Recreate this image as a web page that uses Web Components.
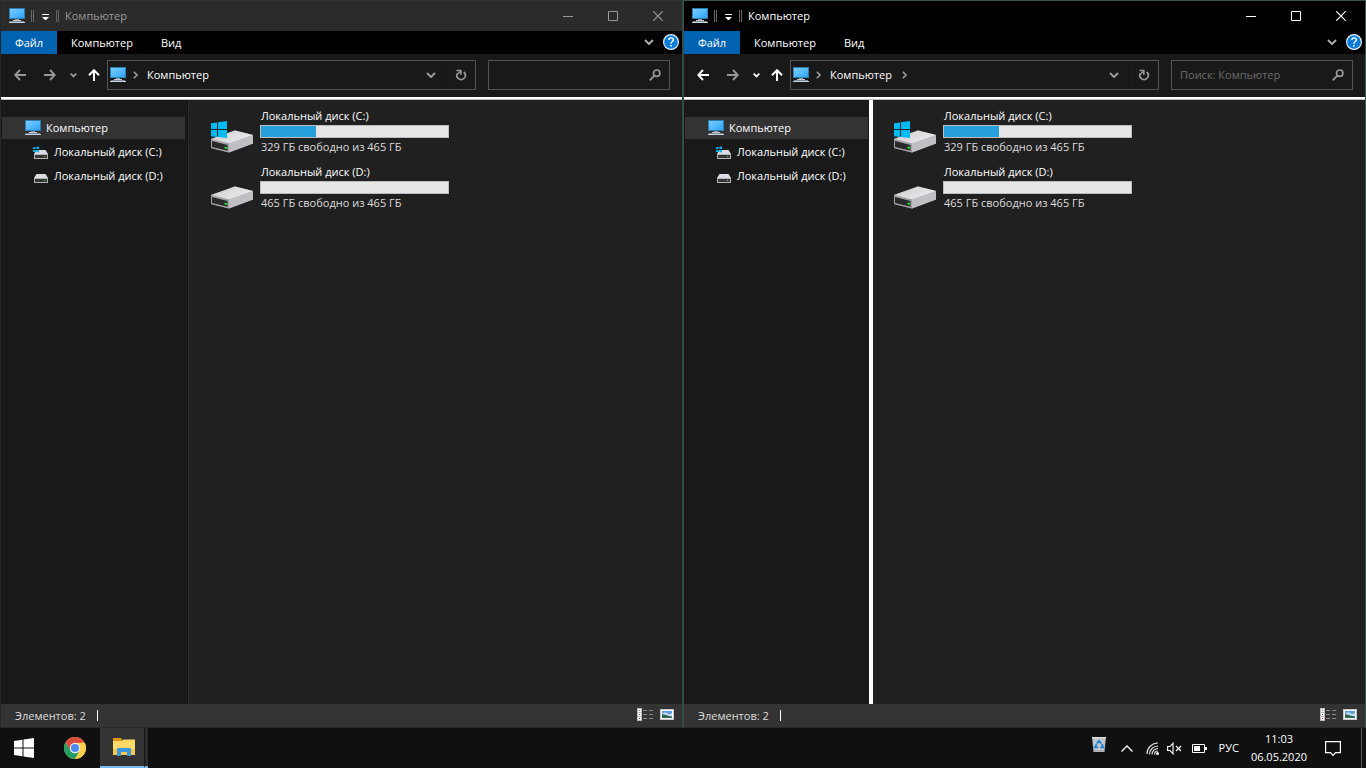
<!DOCTYPE html>
<html lang="ru">
<head>
<meta charset="utf-8">
<title>Компьютер</title>
<style>
html, body { height: 100%; margin: 0; }
body { background: #101010; color: #fff; font: 11px/16px "Open Sans", "Noto Sans", sans-serif; overflow: hidden; }
</style>
</head>
<body>
<desk-top>
  <explorer-window caption="Компьютер" inactive></explorer-window>
  <explorer-window caption="Компьютер" trail search="Поиск: Компьютер" splitter></explorer-window>
  <task-bar slot="bar"></task-bar>
</desk-top>
<script>
const DRIVE = `<defs><linearGradient id="g" x2="1" y2=".6"><stop stop-color="#c9c9cb"/><stop offset="1" stop-color="#ededf0"/></linearGradient></defs><path d="M0 18L24 9.500 42 14V22.500L18 31.500 0 27z" fill="#aaaaad"/><path d="M0 18L24 9.500 42 14l-24 8.500z" fill="url(#g)"/><path d="M18 22.500L42 14v8.500l-24 9z" fill="#c0c0c4"/><path d="M0 18l18 4.500v9L0 27z" fill="#a2a2a4"/><path d="M1 20l15.500 3.900v5.800L1 25.900z" fill="#292929"/><path d="M13.500 25.500l2.500.6v2l-2.500-.6z" fill="#22dd32"/>`;
const SMALL_DRIVE = `<path d="M3.500 6h9L15 10H1z" fill="#dcdce2"/><path d="M1 10h14v5H1z" fill="#b4b4b8"/><path d="M2 11h12v3H2z" fill="#343434"/><path d="M11 12h1v1h-1z" fill="#57d84f"/>`;
const ICONS = {
  pc: [16, 16, `<defs><linearGradient id="g" x2="1" y2="1"><stop stop-color="#7cccff"/><stop offset=".5" stop-color="#55baff"/><stop offset="1" stop-color="#2f9ff5"/></linearGradient></defs><path d="M0 0h16v11H0z" fill="#2b7fae"/><path d="M1 1h14v9H1z" fill="url(#g)"/><path d="M6 11h4v1H6z" fill="#8a98a5"/><path d="M4 12h8v1H4z" fill="#c3ccd5"/><path d="M1 13h14v1H1z" fill="#7b8794"/><path d="M0 14h16v1H0z" fill="#c9d3e2"/>`],
  grip: [3, 12, `<path d="M0 0h1v12H0zM2 0h1v12H2z" fill="#666"/>`],
  quick: [7, 6, `<path d="M0 0h7v1H0zM0 3h7L3.500 6.500z" fill="#fff"/>`],
  min: [10, 10, `<path d="M0 5h10v1H0z" fill="currentColor"/>`],
  max: [10, 10, `<path d="M.5.5h9v9h-9z" fill="none" stroke="currentColor"/>`],
  close: [10, 10, `<path d="M.3.3l9.400 9.400M9.700.3L.3 9.700" fill="none" stroke="currentColor" stroke-width="1.200"/>`],
  down: [10, 6, `<path d="M1 1l4 4 4-4" fill="none" stroke="currentColor" stroke-width="2"/>`],
  smalldown: [7, 5, `<path d="M.7.7l2.800 2.800L6.300.7" fill="none" stroke="currentColor" stroke-width="1.800"/>`],
  right: [5, 8, `<path d="M.8.8L4 4 .8 7.200" fill="none" stroke="currentColor" stroke-width="1.600"/>`],
  back: [12, 12, `<path d="M12 6H1.500M6 1L1.200 6 6 11" fill="none" stroke="currentColor" stroke-width="1.900"/>`],
  forward: [12, 12, `<path d="M0 6h10.500M6 1l4.800 5L6 11" fill="none" stroke="currentColor" stroke-width="1.900"/>`],
  up: [12, 12, `<path d="M6 12V1.500M1 6.200L6 1.200l5 5" fill="none" stroke="currentColor" stroke-width="2"/>`],
  refresh: [12, 12, `<path d="M8.700 3A4.200 4.200 0 1 1 2.200 4.600" fill="none" stroke="currentColor" stroke-width="1.700"/><path d="M1.500 1.500h4.300v4.300" fill="none" stroke="currentColor" stroke-width="1.700"/><path d="M2.300 5.200L5.400 2.200" stroke="currentColor" stroke-width="1.300"/>`],
  find: [12, 12, `<circle cx="7.700" cy="4.200" r="3.200" fill="none" stroke="currentColor" stroke-width="1.700"/><path d="M5.400 6.600L.7 11.300" stroke="currentColor" stroke-width="1.900"/>`],
  help: [16, 16, `<circle cx="8" cy="8" r="7.400" fill="#0b7bd8" stroke="#e4eef7" stroke-width="1.200"/><path d="M5.800 6.100c0-3 4.600-2.800 4.600-.3C10.400 7.600 8 7.500 8 9.700" fill="none" stroke="#fff" stroke-width="1.400"/><path d="M7.200 11h1.600v1.500H7.200z" fill="#fff"/>`],
  drive: [16, 16, SMALL_DRIVE],
  sysdrive: [16, 16, SMALL_DRIVE + `<path d="M0 3.300L2.500 3v2H0zM3.500 2.800L6 2.500V5H3.500zM0 6h2.500v2H0zM3.500 6H6v2.400L3.500 8z" fill="#00b7f2"/>`],
  disk: [42, 34, DRIVE],
  sysdisk: [42, 34, DRIVE + `<path d="M0 2.300L6 1.500V8H0zM7 1.300L16 0v8H7zM0 9h6v7l-6-.8zM7 9h9v8l-9-1z" fill="#00bcf4"/>`],
  details: [16, 13, `<path d="M0 0h5v13H0z" fill="#bbb"/><path d="M1 1h3v3H1zM1 5h3v3H1zM1 9h3v3H1z" fill="#fff"/><path d="M2 2h1v1H2zM2 6h1v1H2z" fill="#546a96"/><path d="M2 10h1v1H2z" fill="#a22"/><path d="M6 2h4v1H6zM12 2h4v1h-4zM6 6h4v1H6zM12 6h4v1h-4zM6 10h4v1H6zM12 10h4v1h-4z" fill="#858585"/>`],
  tiles: [14, 11, `<path d="M0 0h14v11H0z" fill="#c9c9c9"/><path d="M1 1h12v9H1z" fill="#fff"/><path d="M2 2h10v7H2z" fill="#5b9ade"/><path d="M2 5q3-3 5-1t5 0v3H2z" fill="#c3def2"/><path d="M2 5l4 1 6 2v1H2z" fill="#31674d"/>`],
  start: [20, 20, `<path d="M0 3l8.500-1.200V9.500H0zM9.500 1.600L20 0v9.500H9.500zM0 10.500h8.500v7.700L0 17zM9.500 10.500H20V20L9.500 18.400z" fill="#fff"/>`],
  chrome: [22, 22, `<circle cx="11" cy="11" r="11" fill="#fbd04b"/><path d="M1.470 5.500A11 11 0 0 1 20.530 5.500L11 6 6.200 13.500z" fill="#dc4a3e"/><path d="M1.470 5.500A11 11 0 0 0 11 22l4.700-8.200-4.700 2.200-4.500-2.500z" fill="#23a061"/><path d="M11 6h9.800a11 11 0 0 1-9.800 16l4.600-8z" fill="#fbd04b"/><circle cx="11" cy="11" r="5.200" fill="#f4f4f4"/><circle cx="11" cy="11" r="4.100" fill="#4c89f2"/>`],
  folder: [22, 18, `<path d="M0 0h8l2 3H0z" fill="#dd9707"/><path d="M0 3h9l1.500-1.500H22V17H0z" fill="#ffd968"/><path d="M0 11h22v6H0z" fill="#f8c84c"/><path d="M4 18v-7q0-1 1-1h12q1 0 1 1v7h-4v-4H8v4z" fill="#3797df"/>`],
  bin: [14, 15, `<path d="M0 0h14l-1.500 15h-11z" fill="#abb1b7"/><path d="M0 0h14v1.500H0z" fill="#e0e0e0"/><path d="M1 2h12l-1 11H2z" fill="#c1c7ce"/><path d="M4.700 6.500L7 3.800l2.300 2.700M10 7l1 3.300H8M6 10.300H3L4.500 7" fill="none" stroke="#1780d5" stroke-width="1.800"/>`],
  caret: [12, 7, `<path d="M.5 6.500L6 1l5.500 5.500" fill="none" stroke="#fff" stroke-width="1.300"/>`],
  wifi: [13, 13, `<g fill="none" stroke="#ddd" stroke-width="1.200"><path d="M1 12A11 11 0 0 1 12 1M3.500 12.500A8.500 8.500 0 0 1 12 4M6 12.500a6 6 0 0 1 6-6M8.500 12.500A3.500 3.500 0 0 1 12 9"/></g><circle cx="11.500" cy="11.500" r="1.500" fill="#fff"/>`],
  mute: [15, 13, `<path d="M.6 4.500H3L6 1.200v10.600L3 8.500H.6z" fill="none" stroke="#fff" stroke-width="1.100"/><path d="M9 4l5 5M14 4L9 9" stroke="#fff" stroke-width="1.200"/>`],
  battery: [15, 9, `<path d="M.5.5h12v8H.5z" fill="none" stroke="#fff"/><path d="M2 2h6v5H2zM13 3h2v3h-2z" fill="#fff"/>`],
  note: [16, 17, `<path d="M.6 1.600h14.800v11h-4.800L8 15.400 5.400 12.600H.6z" fill="none" stroke="#fff" stroke-width="1.200"/>`]
};

function define(name, render) {
  customElements.define(name, class extends HTMLElement {
    connectedCallback() {
      if (this.shadowRoot) return;
      this.attachShadow({ mode: "open" }).innerHTML = render(this);
    }
  });
}

define("ui-icon", el => {
  const [w, h, art] = ICONS[el.getAttribute("name")];
  return `<style>:host{display:block;flex:none;line-height:0}svg{display:block}</style>
  <svg width="${w}" height="${h}" viewBox="0 0 ${w} ${h}" aria-hidden="true">${art}</svg>`;
});

define("desk-top", () => `<style>
:host{display:grid;grid-template-rows:1fr 40px;height:100vh}
main{display:grid;grid-template-columns:1fr 1fr;min-height:0}
</style><main><slot></slot></main><slot name="bar"></slot>`);

const RESET = `*{box-sizing:border-box}button{font:inherit;color:inherit;background:none;border:0;padding:0;margin:0;display:flex;align-items:center;justify-content:center}`;

define("title-bar", () => `<style>${RESET}
:host{display:flex;align-items:center;height:30px;padding:0 1px 0 8px;background:#000;color:#fff}
:host([inactive]){background:#2b2b2b;color:#999}
.grip{margin-left:6px}.quick{margin:1px 7px 0 8px}.quick+.grip{margin:0 6px 0 0}
h1{font:inherit;margin:0;flex:1}
.caption{width:45px;height:30px;padding:0 1px 1px 0}
</style><ui-icon name="pc"></ui-icon><ui-icon class="grip" name="grip"></ui-icon>
<button class="quick" aria-label="Настройка панели быстрого доступа"><ui-icon name="quick"></ui-icon></button>
<ui-icon class="grip" name="grip"></ui-icon><h1><slot></slot></h1>
<button class="caption" aria-label="Свернуть"><ui-icon name="min"></ui-icon></button>
<button class="caption" aria-label="Развернуть"><ui-icon name="max"></ui-icon></button>
<button class="caption" aria-label="Закрыть"><ui-icon name="close"></ui-icon></button>`);

define("ribbon-tabs", () => `<style>${RESET}
:host{display:flex;height:23px;background:#000}
.tab{padding:0 14px}.file{width:56px;background:#0063b1;padding:0}
.spacer{flex:1}.fold{color:#aaa;margin-right:9px}.help{margin-right:3px}
button{padding-bottom:1px}
</style><button class="tab file">Файл</button><button class="tab">Компьютер</button><button class="tab">Вид</button><span class="spacer"></span>
<button class="fold" aria-label="Развернуть ленту"><ui-icon name="down"></ui-icon></button>
<button class="help" aria-label="Справка"><ui-icon name="help"></ui-icon></button>`);

define("address-bar", el => `<style>${RESET}
:host{display:flex;box-sizing:border-box;align-items:center;height:43px;padding:0 12px 1px 13px;background:#191919;color:#999}
.fwd{margin-left:18px}.recent{margin-left:14px}.up{margin:0 7px 0 11px;color:#fff}
:host([trail]) .live{color:#fff}
.path,.find{display:flex;align-items:center;height:30px;border:1px solid #535353}
.path{flex:1;padding-left:2px}.path .sep{margin-left:7px}.crumb{color:#fff;margin:0 9px}
.path .sep+.crumb+.sep{margin-left:1px}.spacer{flex:1}
.drop{margin-right:9px}.reload{width:30px;height:28px;border-left:1px solid #151515}
.find{width:182px;margin-left:12px;padding:0 8px}
input{flex:1;min-width:0;font:inherit;color:#fff;background:none;border:0;outline:0;padding:0}
input::placeholder{color:#6c6c6c;opacity:1}
</style><button class="live" aria-label="Назад"><ui-icon name="back"></ui-icon></button>
<button class="fwd" aria-label="Вперед"><ui-icon name="forward"></ui-icon></button>
<button class="recent live" aria-label="Последние расположения"><ui-icon name="smalldown"></ui-icon></button>
<button class="up" aria-label="Вверх"><ui-icon name="up"></ui-icon></button>
<div class="path"><ui-icon name="pc"></ui-icon><ui-icon class="sep" name="right"></ui-icon><button class="crumb">Компьютер</button>${el.hasAttribute("trail") ? '<ui-icon class="sep" name="right"></ui-icon>' : ""}<span class="spacer"></span>
<button class="drop" aria-label="Предыдущие расположения"><ui-icon name="down"></ui-icon></button>
<button class="reload" aria-label="Обновить"><ui-icon name="refresh"></ui-icon></button></div>
<div class="find"><input type="text" aria-label="Поиск" placeholder="${el.getAttribute("search") || ""}"><ui-icon name="find"></ui-icon></div>`);

define("nav-item", el => `<style>
:host{display:block}
a{display:flex;align-items:center;height:24px;padding-left:31px;gap:5px;color:#fff;text-decoration:none;white-space:nowrap}
:host([selected]){margin-bottom:1px}
:host([selected]) a{height:22px;padding-left:23px;background:#333}
</style><a href="#"><ui-icon name="${el.getAttribute("icon")}"></ui-icon><slot></slot></a>`);

define("drive-tile", el => `<style>
:host{display:flex;height:56px;gap:7px}
ui-icon{margin-top:13px}
label{display:block;padding-left:1px;color:#fff}
progress{display:block;appearance:none;-webkit-appearance:none;width:189px;height:13px;margin:1px 0;border:1px solid #bcbcbc;background:#e6e6e6;box-sizing:border-box}
progress::-webkit-progress-bar{background:#e6e6e6}
progress::-webkit-progress-value{background:#26a0da}
.free{padding-left:1px;color:#ddd}
</style><ui-icon name="${el.getAttribute("icon")}"></ui-icon>
<div><label for="used"><slot></slot></label><progress id="used" max="465" value="${el.getAttribute("used")}"></progress><div class="free">${el.getAttribute("free")}</div></div>`);

define("status-bar", () => `<style>${RESET}
:host{display:flex;align-items:center;height:23px;padding:0 8px 0 14px;background:#333;color:#ddd}
.end{width:1px;height:11px;background:#fff;margin-left:11px}
.spacer{flex:1}button{padding-bottom:2px}.tiles{margin-left:7px}
</style><span><slot></slot></span><span class="end"></span><span class="spacer"></span>
<button aria-label="Таблица"><ui-icon name="details"></ui-icon></button>
<button class="tiles" aria-label="Крупные значки"><ui-icon name="tiles"></ui-icon></button>`);

define("explorer-window", el => {
  const off = el.hasAttribute("inactive") ? "inactive" : "";
  return `<style>
:host{box-sizing:border-box;display:flex;flex-direction:column;min-width:0;border:1px solid #34534a;border-bottom-color:#292929;background:#202020}
:host([inactive]){border-color:#2c3338 #2f4744 #292929 #24272c}
.rule{height:3px;box-sizing:border-box;background:#fff;border-bottom:1px solid #bbb}
.body{flex:1;display:flex;min-height:0}
nav{box-sizing:border-box;width:187px;padding:17px 2px 0 1px;background:#191919;border-right:1px solid #141414}
.split{width:1px;background:#2b2b2b}
:host([splitter]) nav{width:185px;padding-right:1px;border:0}
:host([splitter]) .split{width:4px;background:#fff}
.files{flex:1;padding:8px 0 0 22px}
:host([splitter]) .files{padding-left:21px}
</style><title-bar ${off}>${el.getAttribute("caption")}</title-bar><ribbon-tabs></ribbon-tabs>
<address-bar ${el.hasAttribute("trail") ? "trail" : ""} search="${el.getAttribute("search") || ""}"></address-bar>
<div class="rule"></div>
<div class="body"><nav><nav-item selected icon="pc">Компьютер</nav-item><div><nav-item icon="sysdrive">Локальный диск (C:)</nav-item><nav-item icon="drive">Локальный диск (D:)</nav-item></div></nav>
<div class="split"></div><div class="files"><drive-tile icon="sysdisk" used="136" free="329 ГБ свободно из 465 ГБ">Локальный диск (C:)</drive-tile><drive-tile icon="disk" used="0" free="465 ГБ свободно из 465 ГБ">Локальный диск (D:)</drive-tile></div></div>
<status-bar>Элементов: 2</status-bar>`;
});

define("task-bar", () => `<style>${RESET}
:host{display:flex;align-items:center;background:#101010;color:#fff}
.app{width:52px;height:40px}.start{width:48px}.chrome{padding-left:2px}
.current{width:44px;background:#333;border-bottom:2px solid #76b9ed;padding-left:4px}
.stack{width:4px;height:40px;background:#2b2b2b;border-left:1px solid #161616;border-bottom:2px solid #76b9ed}
.spacer{flex:1}
.bin{margin:0 15px 8px 0}.caret{margin-right:13px}.wifi{margin-right:8px}.mute{margin-right:10px}.battery{margin-right:12px}
.lang{margin-right:12px}
time{display:flex;flex-direction:column;align-items:center;line-height:18px;margin-right:18px}
.note{margin-right:20px}
.show{width:5px;height:40px;border-left:1px solid #555}
</style><button class="app start" aria-label="Пуск"><ui-icon name="start"></ui-icon></button>
<button class="app chrome" aria-label="Chrome"><ui-icon name="chrome"></ui-icon></button>
<button class="app current" aria-label="Проводник"><ui-icon name="folder"></ui-icon></button><span class="stack"></span><span class="spacer"></span>
<button class="bin" aria-label="Корзина"><ui-icon name="bin"></ui-icon></button>
<button class="caret" aria-label="Скрытые значки"><ui-icon name="caret"></ui-icon></button>
<button class="wifi" aria-label="Сеть"><ui-icon name="wifi"></ui-icon></button>
<button class="mute" aria-label="Звук"><ui-icon name="mute"></ui-icon></button>
<button class="battery" aria-label="Батарея"><ui-icon name="battery"></ui-icon></button>
<button class="lang">РУС</button>
<time datetime="2020-05-06T11:03"><span>11:03</span><span>06.05.2020</span></time>
<button class="note" aria-label="Уведомления"><ui-icon name="note"></ui-icon></button>
<button class="show" aria-label="Показать рабочий стол"></button>`);
</script>
</body>
</html>
